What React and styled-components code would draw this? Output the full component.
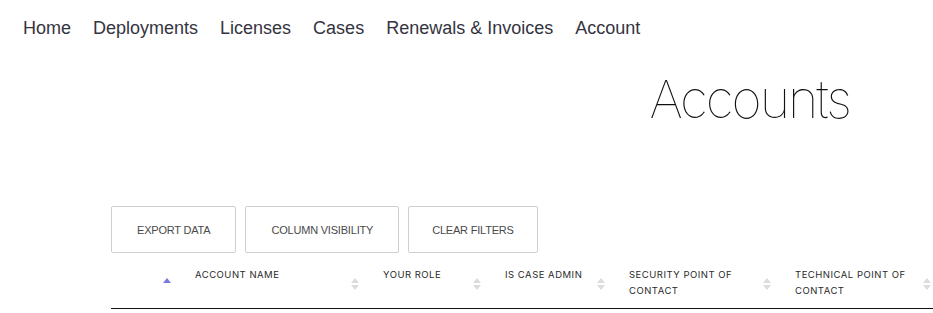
import styled, { createGlobalStyle } from "styled-components";

const GlobalStyle = createGlobalStyle`
  html, body {
    margin: 0;
    padding: 0;
    background: #fff;
    font-family: "Liberation Sans", Arial, sans-serif;
  }
`;

const navItems = ["Home", "Deployments", "Licenses", "Cases", "Renewals & Invoices", "Account"];

const columns = [
  { label: "", width: 66, sort: "asc" },
  { label: "ACCOUNT NAME", width: 188 },
  { label: "YOUR ROLE", width: 122 },
  { label: "IS CASE ADMIN", width: 124 },
  { label: "SECURITY POINT OF CONTACT", width: 166 },
  { label: "TECHNICAL POINT OF CONTACT", width: 160 },
];

const SortIcon = ({ dir }) =>
  dir === "asc" ? (
    <svg width="8" height="14" viewBox="0 0 8 14">
      <polygon points="4,1 8,6 0,6" fill="#7779de" />
    </svg>
  ) : (
    <svg width="8" height="14" viewBox="0 0 8 14">
      <polygon points="4,1 8,6 0,6" fill="#dcdcdc" />
      <polygon points="0,8 8,8 4,13" fill="#dcdcdc" />
    </svg>
  );

const App = () => {
  return (
    <Page>
      <GlobalStyle />
      <Nav>
        {navItems.map((item) => (
          <NavLink key={item}>{item}</NavLink>
        ))}
      </Nav>
      <Hero>
        <Title>Accounts</Title>
      </Hero>
      <Content>
        <Toolbar>
          <ToolButton $pad={25}>EXPORT DATA</ToolButton>
          <ToolButton $pad={25}>COLUMN VISIBILITY</ToolButton>
          <ToolButton $pad={23}>CLEAR FILTERS</ToolButton>
        </Toolbar>
        <HeaderRow>
          {columns.map((col, i) => (
            <HeadCell key={i} $width={col.width}>
              <HeadLabel>{col.label}</HeadLabel>
              <SortIcon dir={col.sort} />
            </HeadCell>
          ))}
        </HeaderRow>
      </Content>
    </Page>
  );
};

const Page = styled.div`
  width: 933px;
  overflow: hidden;
`;

const Nav = styled.nav`
  display: flex;
  gap: 22px;
  padding: 16px 23px 0;
  height: 29px;
`;

const NavLink = styled.a`
  font-size: 18px;
  line-height: 24px;
  color: #34343f;
  cursor: pointer;
  white-space: nowrap;
`;

const Hero = styled.div`
  display: flex;
  justify-content: flex-end;
  padding: 23px 83px 0 0;
  height: 161px;
  box-sizing: border-box;
`;

const Title = styled.h1`
  margin: 0;
  font-family: Inter, "Liberation Sans", sans-serif;
  font-weight: 100;
  font-size: 52px;
  line-height: 64px;
  letter-spacing: -2px;
  color: #111;
`;

const Content = styled.div`
  padding-left: 111px;
`;

const Toolbar = styled.div`
  display: flex;
  gap: 9px;
`;

const ToolButton = styled.button`
  height: 47px;
  padding: 0 ${(p) => p.$pad}px;
  background: #fff;
  border: 1px solid #cfcfcf;
  border-radius: 2px;
  font-family: "Liberation Sans", Arial, sans-serif;
  font-size: 11px;
  color: #4a4a4a;
  letter-spacing: -0.2px;
`;

const HeaderRow = styled.div`
  display: flex;
  margin-top: 14px;
  border-bottom: 1px solid #111;
  height: 41px;
`;

const HeadCell = styled.div`
  flex: 0 0 ${(p) => p.$width}px;
  display: flex;
  justify-content: space-between;
  align-items: flex-start;
  padding: 0 6px 0 18px;
  box-sizing: border-box;
  svg {
    flex: 0 0 auto;
    margin-top: 10px;
  }
`;

const HeadLabel = styled.span`
  font-family: Inter, "Liberation Sans", sans-serif;
  font-size: 9.5px;
  line-height: 16px;
  letter-spacing: 0.5px;
  color: #2a2a2a;
  max-width: 120px;
`;

export default App;
